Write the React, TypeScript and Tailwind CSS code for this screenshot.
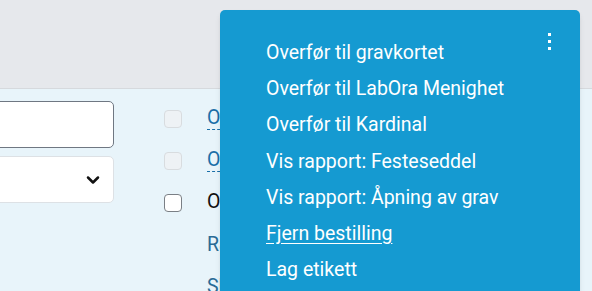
import { ChevronDown } from 'lucide-react';

const menuItems = [
  { label: 'Overfør til gravkortet' },
  { label: 'Overfør til LabOra Menighet' },
  { label: 'Overfør til Kardinal' },
  { label: 'Vis rapport: Festeseddel' },
  { label: 'Vis rapport: Åpning av grav' },
  { label: 'Fjern bestilling', underline: true },
  { label: 'Lag etikett' },
];

export default function App() {
  return (
    <div className="relative h-[291px] w-full overflow-hidden bg-[#e8f4fa] font-['Roboto',sans-serif]">
      <div className="h-[89px] border-b border-[#d6d9dd] bg-[#e6e8ec]" />

      <div className="flex">
        {/* left form column */}
        <div className="ml-[-12px] flex w-[126px] flex-col gap-[8px] pt-[12px]">
          <input
            className="h-[47px] w-full rounded-[5px] border border-[#6f7782] bg-white px-3 text-[18px]"
            defaultValue=""
          />
          <div className="flex h-[47px] w-full items-center justify-end rounded-[5px] border border-[#dde1e5] bg-white pr-[10px]">
            <ChevronDown className="h-[20px] w-[20px] text-[#111]" strokeWidth={3} />
          </div>
        </div>

        {/* middle list */}
        <div className="ml-[50px] flex flex-col pt-[18px] text-[19.5px]">
          <div className="flex h-[42px] items-start gap-[25px]">
            <span className="mt-[3px] h-[18px] w-[18px] shrink-0 rounded-[4px] border border-[#d8dcdf] bg-[#eef2f5]" />
            <span className="border-b border-dashed border-[#1a6fa8] leading-[22px] text-[#1a6fa8]">Overfør</span>
          </div>
          <div className="flex h-[42px] items-start gap-[25px]">
            <span className="mt-[3px] h-[18px] w-[18px] shrink-0 rounded-[4px] border border-[#d8dcdf] bg-[#eef2f5]" />
            <span className="border-b border-dashed border-[#1a6fa8] leading-[22px] text-[#1a6fa8]">Overfør</span>
          </div>
          <div className="flex h-[42px] items-start gap-[25px]">
            <span className="mt-[3px] h-[18px] w-[18px] shrink-0 rounded-[4px] border-[1.5px] border-[#7a7f85] bg-white" />
            <span className="leading-[22px] text-[#111]">Overfør</span>
          </div>
          <div className="flex h-[42px] items-start pl-[43px] pt-[2px]">
            <span className="leading-[20px] text-[#2a6b96]">Rapport</span>
          </div>
          <div className="flex h-[42px] items-start pl-[43px] pt-[2px]">
            <span className="leading-[20px] text-[#2a6b96]">Slett</span>
          </div>
        </div>
      </div>

      {/* dropdown menu */}
      <div className="absolute left-[220px] top-[10px] h-[300px] w-[360px] rounded-t-[5px] bg-[#159ad1] pl-[46px] pt-[25px] shadow-md">
        <div className="absolute right-[29px] top-[23px] flex flex-col gap-[4px]">
          <span className="h-[3px] w-[3px] bg-white" />
          <span className="h-[3px] w-[3px] bg-white" />
          <span className="h-[3px] w-[3px] bg-white" />
        </div>
        <ul className="flex flex-col">
          {menuItems.map((item) => (
            <li
              key={item.label}
              className={`h-[36.2px] text-[19.5px] leading-[36px] text-white ${item.underline ? 'underline underline-offset-[3px]' : ''}`}
            >
              {item.label}
            </li>
          ))}
        </ul>
      </div>
    </div>
  );
}
